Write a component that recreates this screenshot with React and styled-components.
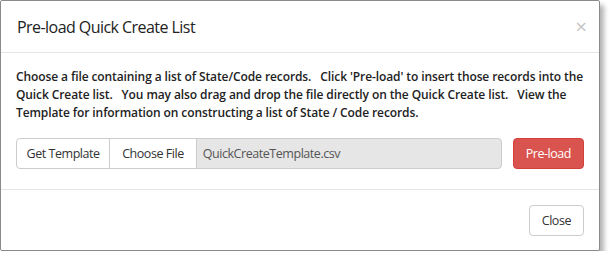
import styled, { createGlobalStyle } from 'styled-components';

const GlobalStyle = createGlobalStyle`
  body {
    margin: 0;
    background: #fff;
    font-family: "Open Sans", "Noto Sans", sans-serif;
    color: #333;
  }
`;

const Dialog = styled.div`
  width: 598px;
  border: 1px solid #8a8a8a;
  border-radius: 2px;
  background: #fff;
  box-shadow: 4px 5px 5px rgba(0, 0, 0, 0.3);
`;

const Header = styled.div`
  display: flex;
  align-items: center;
  justify-content: space-between;
  padding: 14px 12px 13px 16px;
  border-bottom: 1px solid #e5e5e5;
`;

const Title = styled.h4`
  margin: 0;
  font-size: 16px;
  font-weight: 400;
  line-height: 24px;
  letter-spacing: -0.55px;
  color: #222;
`;

const CloseX = styled.span`
  font-size: 20px;
  line-height: 20px;
  color: #c4c4c4;
`;

const Body = styled.div`
  padding: 15px 15px 20px 15px;
  border-bottom: 1px solid #e5e5e5;
`;

const Info = styled.p`
  margin: 0 0 16px;
  font-size: 12px;
  font-weight: 600;
  line-height: 18px;
  letter-spacing: -0.1px;
  color: #222;
  white-space: pre;
`;

const Row = styled.div`
  display: flex;
  align-items: stretch;
  gap: 11px;
`;

const Group = styled.div`
  display: flex;
  flex: 1;
  height: 31px;
`;

const Btn = styled.button`
  font-family: inherit;
  font-size: 12.5px;
  letter-spacing: -0.45px;
  background: ${p => (p.$danger ? '#d9534f' : '#fff')};
  color: ${p => (p.$danger ? '#fff' : '#333')};
  border: 1px solid ${p => (p.$danger ? '#d43f3a' : '#ccc')};
  border-radius: ${p => p.$radius || '4px'};
  margin-left: ${p => (p.$join ? '-1px' : '0')};
  padding: 0 ${p => p.$pad || '12px'};
  height: 31px;
  cursor: pointer;
`;

const FileBox = styled.div`
  flex: 1;
  display: flex;
  align-items: center;
  margin-left: -1px;
  padding: 0 6px;
  font-size: 12.5px;
  letter-spacing: -0.45px;
  color: #555;
  background: #e6e6e6;
  border: 1px solid #ccc;
  border-radius: 0 4px 4px 0;
`;

const Footer = styled.div`
  display: flex;
  justify-content: flex-end;
  padding: 15px 15px 14px;
`;

export default function App() {
  return (
    <>
      <GlobalStyle />
      <Dialog>
        <Header>
          <Title>Pre-load Quick Create List</Title>
          <CloseX>×</CloseX>
        </Header>
        <Body>
          <Info>
            {"Choose a file containing a list of State/Code records.   Click 'Pre-load' to insert those records into the\nQuick Create list.   You may also drag and drop the file directly on the Quick Create list.   View the\nTemplate for information on constructing a list of State / Code records."}
          </Info>
          <Row>
            <Group>
              <Btn $radius="4px 0 0 4px" $pad="9.5px">Get Template</Btn>
              <Btn $radius="0" $join>Choose File</Btn>
              <FileBox>QuickCreateTemplate.csv</FileBox>
            </Group>
            <Btn $danger>Pre-load</Btn>
          </Row>
        </Body>
        <Footer>
          <Btn>Close</Btn>
        </Footer>
      </Dialog>
    </>
  );
}
